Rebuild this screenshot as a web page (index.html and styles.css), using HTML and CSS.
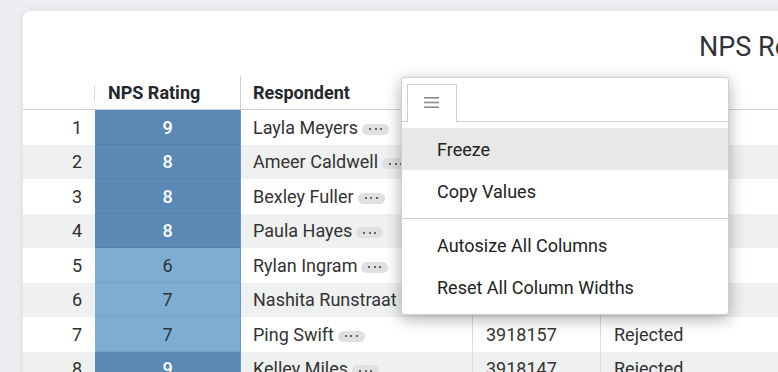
FILE: index.html
```html
<!DOCTYPE html>
<html>
<head>
<meta charset="utf-8">
<link rel="stylesheet" href="styles.css">
</head>
<body>
<div class="card">
  <div class="title">NPS Responses</div>
  <div class="table">
    <div class="row head">
      <div class="c num"><span class="hdiv"></span></div>
      <div class="c nps-h">NPS Rating</div>
      <div class="c name-h">Respondent</div>
      <div class="c col4"></div>
      <div class="c col5"></div>
    </div>
    <div class="row">
      <div class="c num">1</div>
      <div class="c nps hi">9</div>
      <div class="c name">Layla Meyers<span class="more"><i></i><i></i><i></i></span></div>
      <div class="c col4"></div>
      <div class="c col5"></div>
    </div>
    <div class="row alt">
      <div class="c num">2</div>
      <div class="c nps hi">8</div>
      <div class="c name">Ameer Caldwell<span class="more"><i></i><i></i><i></i></span></div>
      <div class="c col4"></div>
      <div class="c col5"></div>
    </div>
    <div class="row">
      <div class="c num">3</div>
      <div class="c nps hi">8</div>
      <div class="c name">Bexley Fuller<span class="more"><i></i><i></i><i></i></span></div>
      <div class="c col4"></div>
      <div class="c col5"></div>
    </div>
    <div class="row alt">
      <div class="c num">4</div>
      <div class="c nps hi">8</div>
      <div class="c name">Paula Hayes<span class="more"><i></i><i></i><i></i></span></div>
      <div class="c col4"></div>
      <div class="c col5"></div>
    </div>
    <div class="row">
      <div class="c num">5</div>
      <div class="c nps lo">6</div>
      <div class="c name">Rylan Ingram<span class="more"><i></i><i></i><i></i></span></div>
      <div class="c col4"></div>
      <div class="c col5"></div>
    </div>
    <div class="row alt">
      <div class="c num">6</div>
      <div class="c nps lo">7</div>
      <div class="c name">Nashita Runstraat<span class="more"><i></i><i></i><i></i></span></div>
      <div class="c col4"></div>
      <div class="c col5"></div>
    </div>
    <div class="row">
      <div class="c num">7</div>
      <div class="c nps lo">7</div>
      <div class="c name">Ping Swift<span class="more"><i></i><i></i><i></i></span></div>
      <div class="c col4">3918157</div>
      <div class="c col5">Rejected</div>
    </div>
    <div class="row alt">
      <div class="c num">8</div>
      <div class="c nps hi">9</div>
      <div class="c name">Kelley Miles<span class="more"><i></i><i></i><i></i></span></div>
      <div class="c col4">3918147</div>
      <div class="c col5">Rejected</div>
    </div>
  </div>
</div>

<div class="menu">
  <div class="tabs">
    <div class="tab">
      <svg width="16" height="12" viewBox="0 0 16 12"><rect x="0" y="1" width="15" height="1.6" fill="#8a8a8a"/><rect x="0" y="5.7" width="15" height="1.6" fill="#8a8a8a"/><rect x="0" y="10.4" width="15" height="1.6" fill="#8a8a8a"/></svg>
    </div>
  </div>
  <div class="items">
    <div class="item active">Freeze</div>
    <div class="item">Copy Values</div>
    <div class="sep"></div>
    <div class="item">Autosize All Columns</div>
    <div class="item">Reset All Column Widths</div>
  </div>
</div>
</body>
</html>
```

FILE: styles.css
```css
html, body {
  margin: 0;
  padding: 0;
}
body {
  width: 778px;
  height: 372px;
  overflow: hidden;
  background: #eceef2;
  font-family: Roboto, "Liberation Sans", sans-serif;
  color: #333;
  position: relative;
}
.card {
  margin: 11px 0 0 23px;
  width: 1000px;
  height: 420px;
  background: #fff;
  border-radius: 8px 0 0 0;
  box-shadow: 0 0 8px rgba(40, 50, 80, 0.10);
  overflow: hidden;
}
.title {
  padding: 20px 0 0 676px;
  height: 45px;
  font-size: 27px;
  line-height: 32px;
  color: #30343a;
  white-space: nowrap;
}
.table {
  display: flex;
  flex-direction: column;
}
.row {
  display: grid;
  grid-template-columns: 72px 146px 231px 128px 1fr;
  height: 34.5px;
  font-size: 18px;
}
.row.alt {
  background: #eff0f0;
}
.row.head {
  height: 33px;
  border-bottom: 1px solid #d0d0d0;
  font-weight: 700;
  color: #24272b;
}
.c {
  display: flex;
  align-items: center;
  white-space: nowrap;
  overflow: hidden;
}
.num {
  justify-content: flex-end;
  padding-right: 13px;
  color: #2f2f2f;
}
.head .num {
  position: relative;
}
.hdiv {
  position: absolute;
  right: 0;
  top: 9px;
  width: 1px;
  height: 16px;
  background: #d8d8d8;
}
.nps-h {
  padding-left: 13px;
  border-right: 1px solid #d0d0d0;
}
.name-h {
  padding-left: 12px;
}
.nps {
  justify-content: center;
  border-right: 1px solid #6f96bd;
  box-shadow: inset 0 -1px 0 rgba(0, 0, 0, 0.06);
}
.nps.hi {
  background: #5b89b6;
  color: #fff;
  font-weight: 500;
}
.nps.lo {
  background: #7eadd3;
  color: #2e3338;
}
.name {
  padding-left: 12px;
}
.col4 {
  padding-left: 13px;
  border-left: 1px solid #dcdcdc;
}
.col5 {
  padding-left: 13px;
  border-left: 1px solid #dcdcdc;
}
.head .col4, .head .col5 {
  border-left: none;
}
.more {
  display: inline-flex;
  align-items: center;
  justify-content: center;
  gap: 3.5px;
  width: 27px;
  height: 11px;
  margin: 4px 0 0 4px;
  border-radius: 6px;
  background: #dfe0e1;
}
.more i {
  display: block;
  width: 2px;
  height: 2px;
  border-radius: 1px;
  background: #3a3a3a;
}
.menu {
  position: absolute;
  left: 401px;
  top: 77px;
  width: 328px;
  box-sizing: border-box;
  background: #fff;
  border: 1px solid #cfcfcf;
  border-radius: 3px;
  box-shadow: 0 4px 16px rgba(0, 0, 0, 0.32);
  font-size: 18px;
  color: #222;
}
.tabs {
  display: flex;
  padding: 6px 0 0 5px;
  height: 37px;
  border-bottom: 1px solid #cfcfcf;
}
.tab {
  width: 50px;
  height: 38px;
  box-sizing: border-box;
  border: 1px solid #cfcfcf;
  border-bottom: none;
  background: #fff;
  display: flex;
  align-items: center;
  justify-content: center;
  padding: 0 0 4px 0;
}
.items {
  padding: 6px 0;
}
.item {
  height: 42px;
  display: flex;
  align-items: center;
  padding-left: 35px;
}
.item.active {
  background: #e7e8e8;
}
.sep {
  height: 1px;
  background: #cfcfcf;
  margin: 6px 0 5px;
}
```
